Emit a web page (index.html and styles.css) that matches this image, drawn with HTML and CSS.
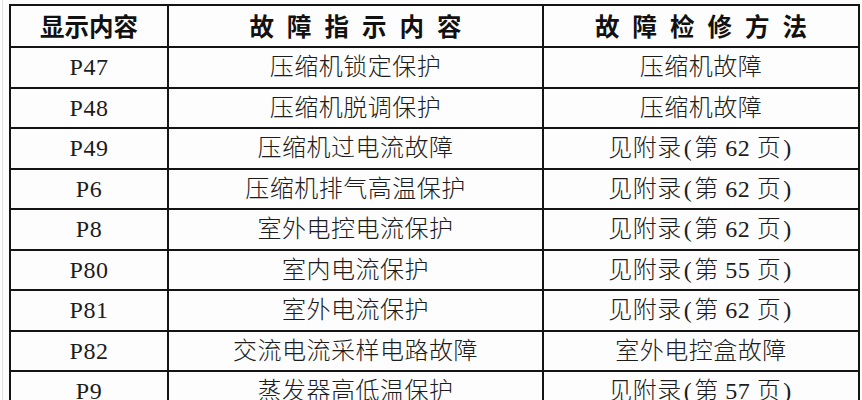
FILE: index.html
```html
<!DOCTYPE html>
<html lang="zh-CN">
<head>
<meta charset="utf-8">
<title>故障代码表</title>
<link rel="stylesheet" href="styles.css">
</head>
<body>
<div class="page">
  <table class="fault-table">
    <colgroup>
      <col class="c1">
      <col class="c2">
      <col class="c3">
    </colgroup>
    <thead>
      <tr>
        <th>显示内容</th>
        <th><span class="spaced">故障指示内容</span></th>
        <th><span class="spaced">故障检修方法</span></th>
      </tr>
    </thead>
    <tbody>
      <tr><td>P47</td><td>压缩机锁定保护</td><td>压缩机故障</td></tr>
      <tr><td>P48</td><td>压缩机脱调保护</td><td>压缩机故障</td></tr>
      <tr><td>P49</td><td>压缩机过电流故障</td><td>见附录<span class="paren">(</span>第 62 页<span class="paren">)</span></td></tr>
      <tr><td>P6</td><td>压缩机排气高温保护</td><td>见附录<span class="paren">(</span>第 62 页<span class="paren">)</span></td></tr>
      <tr><td>P8</td><td>室外电控电流保护</td><td>见附录<span class="paren">(</span>第 62 页<span class="paren">)</span></td></tr>
      <tr><td>P80</td><td>室内电流保护</td><td>见附录<span class="paren">(</span>第 55 页<span class="paren">)</span></td></tr>
      <tr><td>P81</td><td>室外电流保护</td><td>见附录<span class="paren">(</span>第 62 页<span class="paren">)</span></td></tr>
      <tr><td>P82</td><td>交流电流采样电路故障</td><td>室外电控盒故障</td></tr>
      <tr><td>P9</td><td>蒸发器高低温保护</td><td>见附录<span class="paren">(</span>第 57 页<span class="paren">)</span></td></tr>
    </tbody>
  </table>
</div>
</body>
</html>
```

FILE: styles.css
```css
html, body {
  margin: 0;
  padding: 0;
  background: #fdfdfd;
}

.page {
  padding: 4px 0 0 6px;
  border-left: 1px solid #e2e2e2;
  margin-left: 2px;
  height: 396px;
  overflow: hidden;
}

.fault-table {
  border-collapse: collapse;
  table-layout: fixed;
  width: 849px;
  color: #1c1c1c;
  font-family: "Liberation Serif", "Noto Sans CJK SC", serif;
  font-size: 24px;
  line-height: 1;
}

.c1 { width: 158px; }
.c2 { width: 375px; }
.c3 { width: 316px; }

.fault-table th,
.fault-table td {
  border: 2px solid #141414;
  padding: 0;
  text-align: center;
  vertical-align: middle;
}

.fault-table th {
  height: 40px;
  font-family: "Noto Sans CJK SC", sans-serif;
  font-weight: 700;
  font-size: 24.5px;
  color: #111;
}

.fault-table td {
  height: 38.5px;
  font-weight: 300;
  letter-spacing: 0.5px;
}

.paren {
  padding: 0 2px;
}

.spaced {
  letter-spacing: 13px;
  padding-left: 13px;
}
```
